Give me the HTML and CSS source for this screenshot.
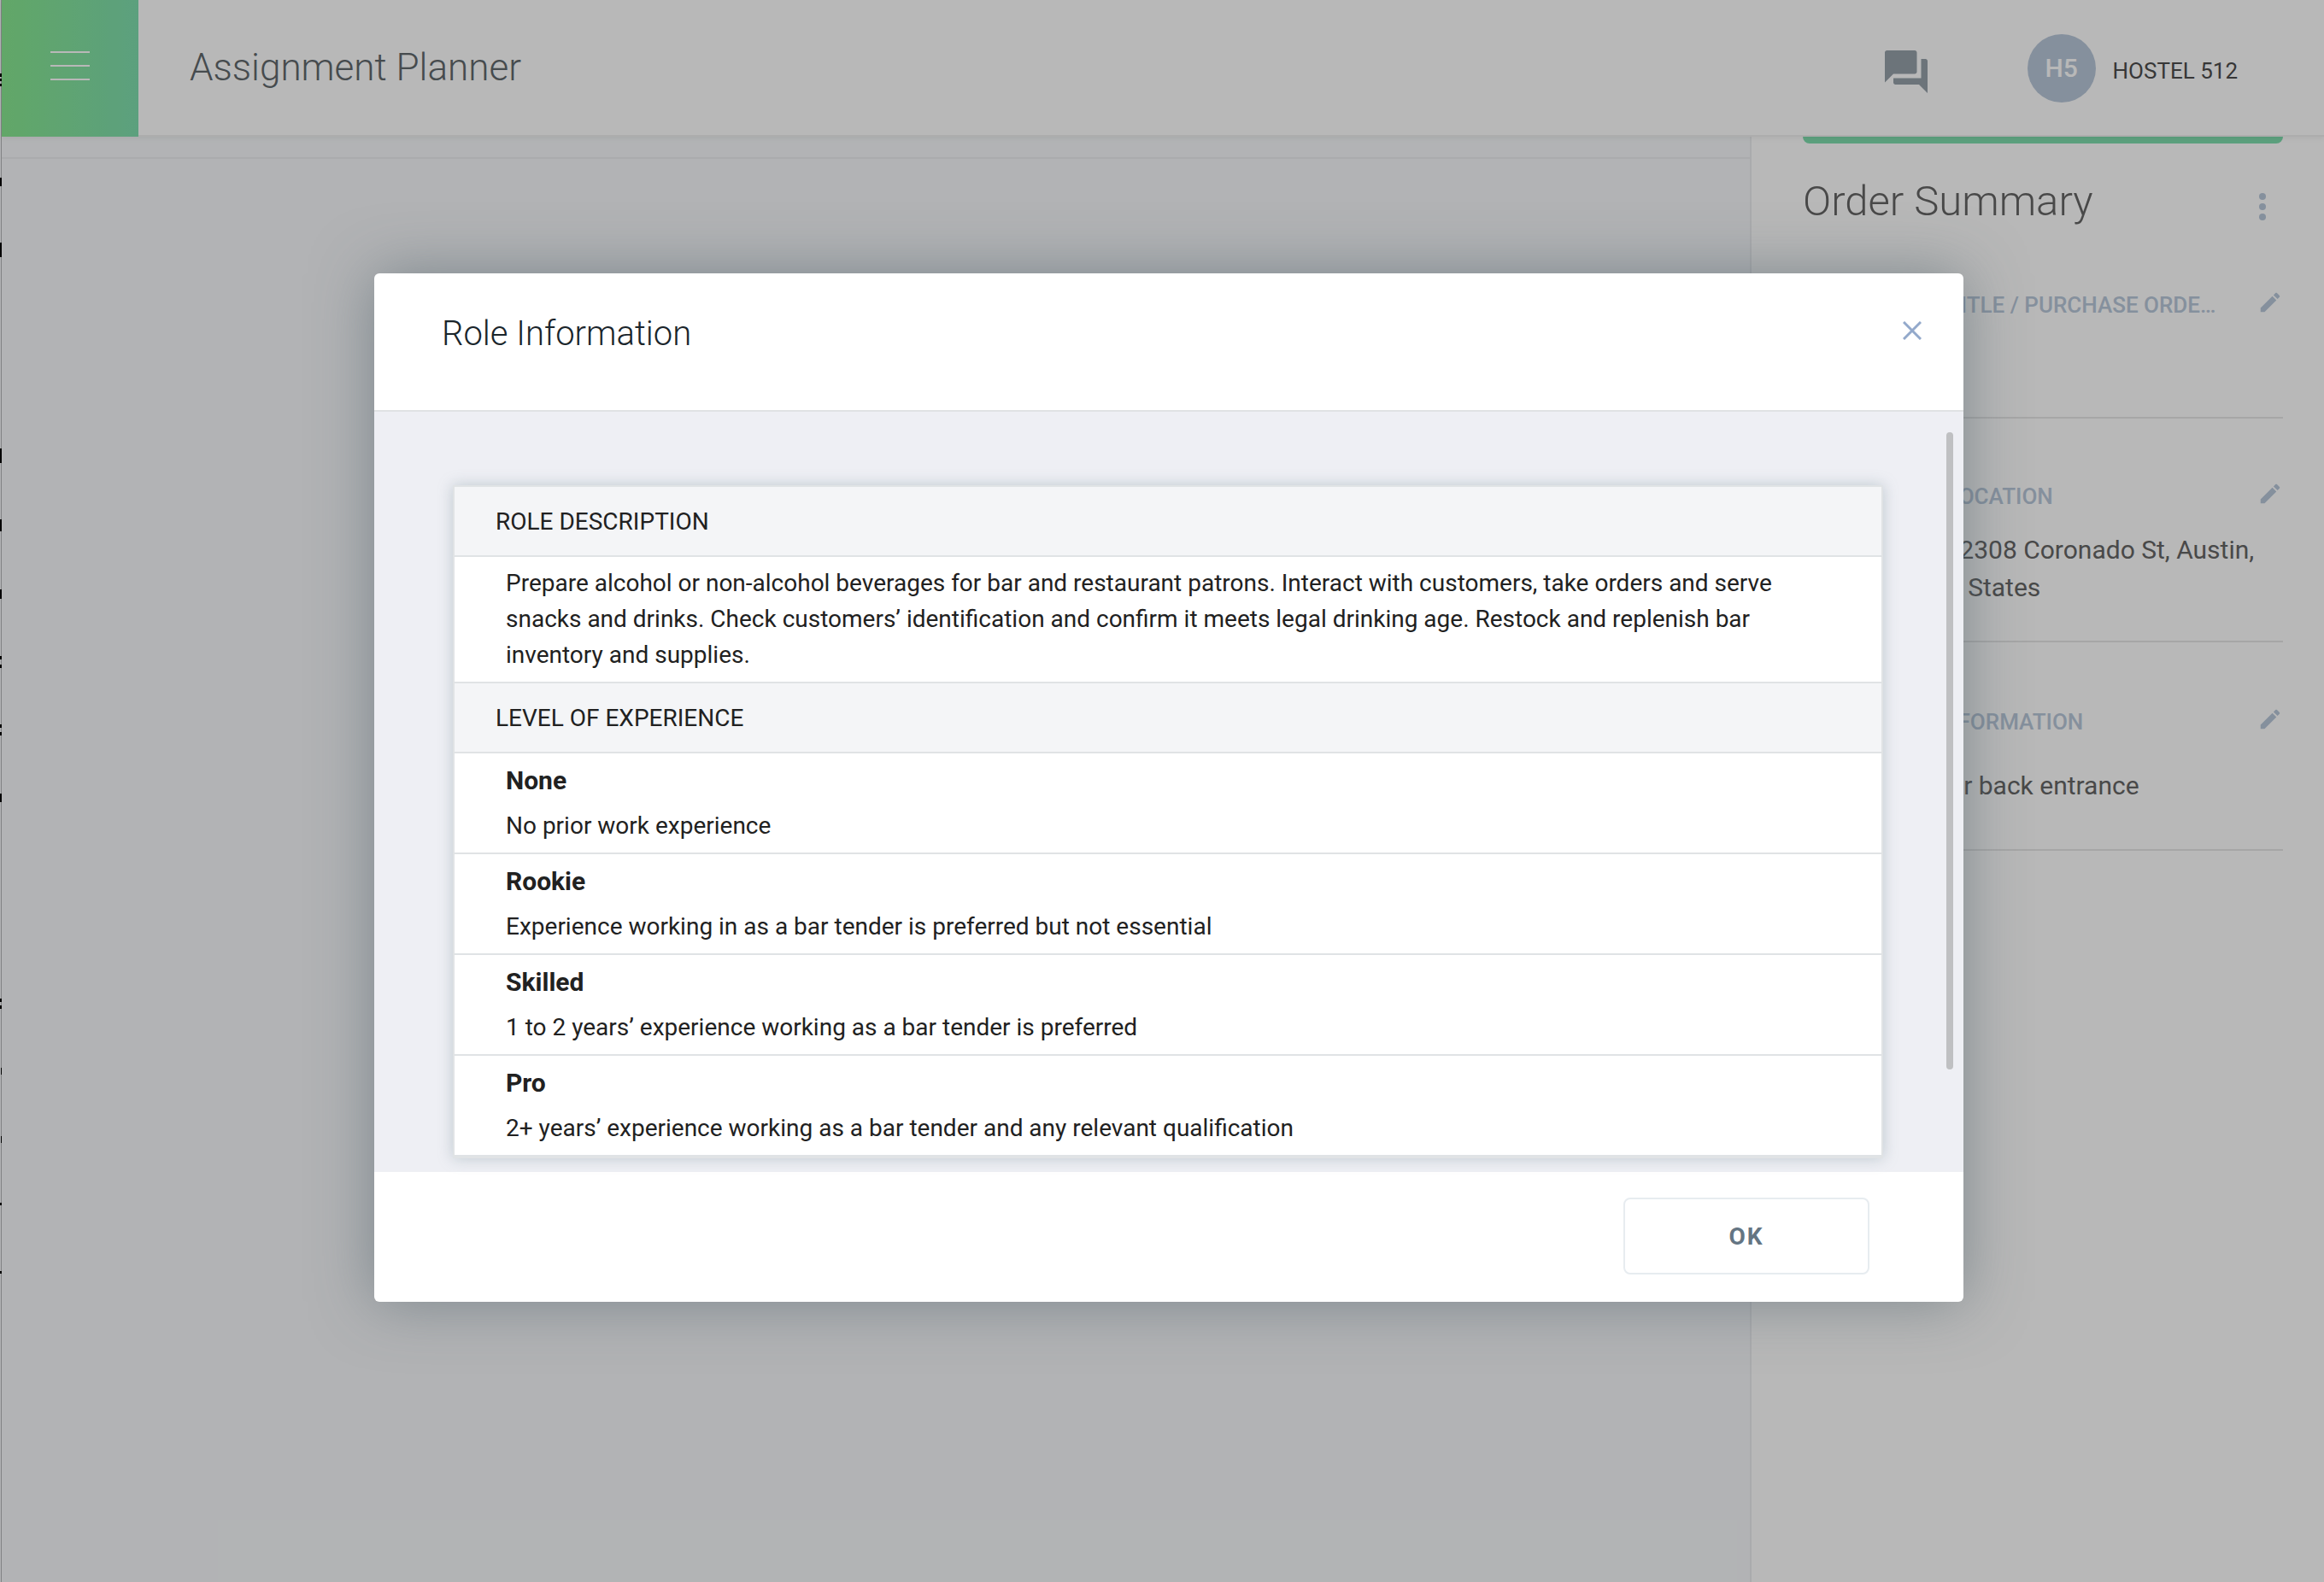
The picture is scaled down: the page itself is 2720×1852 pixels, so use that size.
FILE: index.html
```html
<!DOCTYPE html>
<html lang="en">
<head>
<meta charset="utf-8">
<title>Assignment Planner</title>
<link rel="stylesheet" href="styles.css">
</head>
<body>
<svg class="edge" width="2" aria-hidden="true"><path class="edge-line" d="M1 0h1v4000h-1z"/><path d="M0 86h2v4H0zM0 92h2v3H0zM0 98h2v3H0zM0 208h2v10H0zM0 284h2v17H0zM0 525h2v17H0zM0 608h2v14H0zM0 690h2v11H0zM0 768h2v4H0zM0 778h2v4H0zM0 848h2v4H0zM0 857h2v4H0zM0 929h2v10H0zM0 1169h2v4H0zM0 1177h2v4H0zM1 1250h1v8H1zM1 1330h1v8H1zM0 1408h2v3H0zM0 1488h2v3H0z"/></svg>
<div class="app">
  <header class="topbar">
    <button class="menu" type="button" aria-label="Menu"><span></span><span></span><span></span></button>
    <h1 class="topbar-title">Assignment Planner</h1>
    <button class="icon-button chat" type="button" aria-label="Messages">
      <svg viewBox="0 0 24 24" width="60" height="60"><path d="M21 6h-2v9H6v2c0 .55.45 1 1 1h11l4 4V7c0-.55-.45-1-1-1zm-4 6V3c0-.55-.45-1-1-1H3c-.55 0-1 .45-1 1v14l4-4h10c.55 0 1-.45 1-1z"/></svg>
    </button>
    <a class="account" href="#"><span class="avatar">H5</span><span class="account-name">HOSTEL 512</span></a>
  </header>
  <div class="content">
    <main class="board"></main>
    <aside class="summary">
      <div class="summary-bar"></div>
      <div class="summary-head">
        <h2>Order Summary</h2>
        <button class="icon-button more" type="button" aria-label="More options">
          <svg viewBox="0 0 8 32" width="8" height="32"><circle cx="4" cy="4" r="4"/><circle cx="4" cy="16" r="4"/><circle cx="4" cy="28" r="4"/></svg>
        </button>
      </div>
      <section class="detail detail-first">
        <div class="detail-head">
          <h3>ASSIGNMENT TITLE / PURCHASE ORDER NUMBER</h3>
          <button class="icon-button edit" type="button" aria-label="Edit title"><svg viewBox="0 0 24 24" width="30" height="30"><path d="M3 17.25V21h3.75L17.81 9.94l-3.75-3.75L3 17.25zM20.71 7.04c.39-.39.39-1.02 0-1.41l-2.34-2.34c-.39-.39-1.02-.39-1.41 0l-1.83 1.83 3.75 3.75 1.83-1.83z"/></svg></button>
        </div>
      </section>
      <section class="detail">
        <div class="detail-head">
          <h3>ASSIGNMENT LOCATION</h3>
          <button class="icon-button edit" type="button" aria-label="Edit location"><svg viewBox="0 0 24 24" width="30" height="30"><path d="M3 17.25V21h3.75L17.81 9.94l-3.75-3.75L3 17.25zM20.71 7.04c.39-.39.39-1.02 0-1.41l-2.34-2.34c-.39-.39-1.02-.39-1.41 0l-1.83 1.83 3.75 3.75 1.83-1.83z"/></svg></button>
        </div>
        <p>Hostel 512 — 2308 Coronado St, Austin,<br>TX, the United States</p>
      </section>
      <section class="detail detail-last">
        <div class="detail-head">
          <h3>ADDITIONAL INFORMATION</h3>
          <button class="icon-button edit" type="button" aria-label="Edit information"><svg viewBox="0 0 24 24" width="30" height="30"><path d="M3 17.25V21h3.75L17.81 9.94l-3.75-3.75L3 17.25zM20.71 7.04c.39-.39.39-1.02 0-1.41l-2.34-2.34c-.39-.39-1.02-.39-1.41 0l-1.83 1.83 3.75 3.75 1.83-1.83z"/></svg></button>
        </div>
        <p>Use the side or back entrance</p>
      </section>
    </aside>
  </div>
</div>

<div class="overlay">
  <section class="dialog" role="dialog" aria-modal="true" aria-labelledby="dialog-title">
    <header class="dialog-head">
      <h2 id="dialog-title">Role Information</h2>
      <button class="close" type="button" aria-label="Close"><svg viewBox="0 0 22 22" width="22" height="22"><path d="M1 1l20 20M21 1L1 21"/></svg></button>
    </header>
    <div class="dialog-body">
      <div class="card">
        <h3>ROLE DESCRIPTION</h3>
        <p class="description">Prepare alcohol or non-alcohol beverages for bar and restaurant patrons. Interact with customers, take orders and serve snacks and drinks. Check customers’ identification and confirm it meets legal drinking age. Restock and replenish bar inventory and supplies.</p>
        <h3>LEVEL OF EXPERIENCE</h3>
        <dl class="levels">
          <div class="level"><dt>None</dt><dd>No prior work experience</dd></div>
          <div class="level"><dt>Rookie</dt><dd>Experience working in as a bar tender is preferred but not essential</dd></div>
          <div class="level"><dt>Skilled</dt><dd>1 to 2 years’ experience working as a bar tender is preferred</dd></div>
          <div class="level"><dt>Pro</dt><dd>2+ years’ experience working as a bar tender and any relevant qualification</dd></div>
        </dl>
      </div>
      <div class="thumb"></div>
    </div>
    <footer class="dialog-foot"><button class="ok" type="button">OK</button></footer>
  </section>
</div>
</body>
</html>
```
FILE: styles.css
```css
* { box-sizing: border-box; }
body, h1, h2, h3, p, dl, dd { margin: 0; }
body {
  display: flex;
  min-height: 100vh;
  background: #f7f9fb;
  font-family: Roboto, "Liberation Sans", sans-serif;
  font-size: 28px;
  line-height: 42px;
  color: #212121;
}
button { font: inherit; color: inherit; border: 0; padding: 0; background: none; cursor: pointer; }
svg { display: block; }

/* Sliver of the window behind the page */
.edge { height: auto; }
.edge-line { fill: #b4b6b8; }

.app { display: flex; flex: 1; flex-direction: column; }

/* Top bar */
.topbar {
  position: relative;
  display: flex;
  align-items: center;
  height: 160px;
  padding-right: 101px;
  background: #fff;
  box-shadow: inset 0 -2px 0 #f0f0f0, 0 2px 6px rgba(0, 0, 0, 0.06);
}
.menu {
  display: flex;
  flex-direction: column;
  align-items: center;
  justify-content: center;
  gap: 14px;
  width: 160px;
  height: 160px;
  padding-bottom: 6px;
  background: linear-gradient(90deg, #88e890, #80deaf);
}
.menu span { width: 46px; height: 2px; background: #fff; }
.topbar-title { flex: 1; margin-left: 60px; padding-bottom: 2px; font-size: 44px; font-weight: 300; color: #61686c; }
.icon-button svg { fill: #b9c8da; }
.chat { margin-right: 112px; padding-top: 8px; }
.chat svg { fill: #96a1aa; }
.account { display: flex; align-items: center; gap: 20px; color: #4d4d4d; text-decoration: none; }
.account-name { padding-top: 5px; font-size: 26px; }
.avatar {
  width: 80px;
  border-radius: 50%;
  background: #b9c8da;
  color: #fff;
  font-size: 30px;
  font-weight: 500;
  line-height: 80px;
  text-align: center;
}

/* Page content */
.content { display: flex; flex: 1; }
.board { flex: 1; margin-top: 24px; border-top: 2px solid #eceef0; }
.summary {
  width: 672px;
  padding: 0 48px 0 60px;
  background: #fff;
  border-left: 2px solid #eceef0;
}
.summary-bar { height: 8px; border-radius: 0 0 8px 8px; background: #80deaf; }
.summary-head { display: flex; align-items: center; justify-content: space-between; padding: 38px 20px 0 0; }
.summary-head h2 { font-size: 49px; font-weight: 300; line-height: 60px; color: #666; }
.more { padding-top: 12px; }
.detail { min-height: 262px; padding-top: 70px; border-bottom: 2px solid #e6e6e6; }
.detail-first { min-height: 224px; }
.detail-last { min-height: 244px; padding-top: 72px; }
.detail-head { display: flex; align-items: center; justify-content: space-between; gap: 44px; }
.detail h3 {
  overflow: hidden;
  font-size: 26px;
  font-weight: 500;
  color: #b9c8da;
  text-overflow: ellipsis;
  white-space: nowrap;
}
.edit { padding-bottom: 6px; }
.detail p { margin-top: 20px; font-size: 30px; line-height: 44px; color: #666; }
.detail-last p { margin-top: 32px; }

/* Dialog */
.overlay {
  position: absolute;
  inset: 0;
  padding: 320px 422px 0 438px;
  background: rgba(0, 0, 0, 0.28);
}
.dialog { border-radius: 6px; background: #fff; box-shadow: 0 0 70px rgba(69, 90, 100, 0.5); }
.dialog-head {
  display: flex;
  align-items: center;
  justify-content: space-between;
  height: 162px;
  padding: 0 49px 18px 79px;
  border-bottom: 2px solid #e0e2e4;
}
.dialog-head h2 { font-size: 40px; font-weight: 300; color: #1a252b; }
.close { padding-bottom: 8px; }
.close path { fill: none; stroke: #93a9cb; stroke-width: 3; }
.dialog-body { position: relative; padding: 86px 94px 16px 92px; background: #eeeff4; }
.card { border: 2px solid #e0e3e5; background: #fff; box-shadow: 0 0 16px rgba(120, 144, 156, 0.4); }
.card h3 {
  padding: 2px 48px 0;
  font-size: 28px;
  font-weight: 400;
  line-height: 78px;
  background: #f4f5f7;
  border-bottom: 2px solid #e0e3e5;
}
.description { padding: 10px 60px; border-bottom: 2px solid #e0e3e5; }
.level { display: grid; gap: 11px; padding: 11px 60px 10px; border-bottom: 2px solid #e0e3e5; }
.level dt { font-size: 30px; font-weight: 700; }
.thumb {
  position: absolute;
  top: 24px;
  right: 12px;
  bottom: 120px;
  width: 8px;
  border-radius: 4px;
  background: #bfc0c2;
}
.dialog-foot { display: flex; justify-content: flex-end; padding: 30px 110px 32px; }
.ok {
  width: 288px;
  height: 90px;
  padding-top: 2px;
  border: 2px solid #e7ecf0;
  border-radius: 8px;
  color: #647583;
  font-weight: 700;
  letter-spacing: 2px;
}
```
